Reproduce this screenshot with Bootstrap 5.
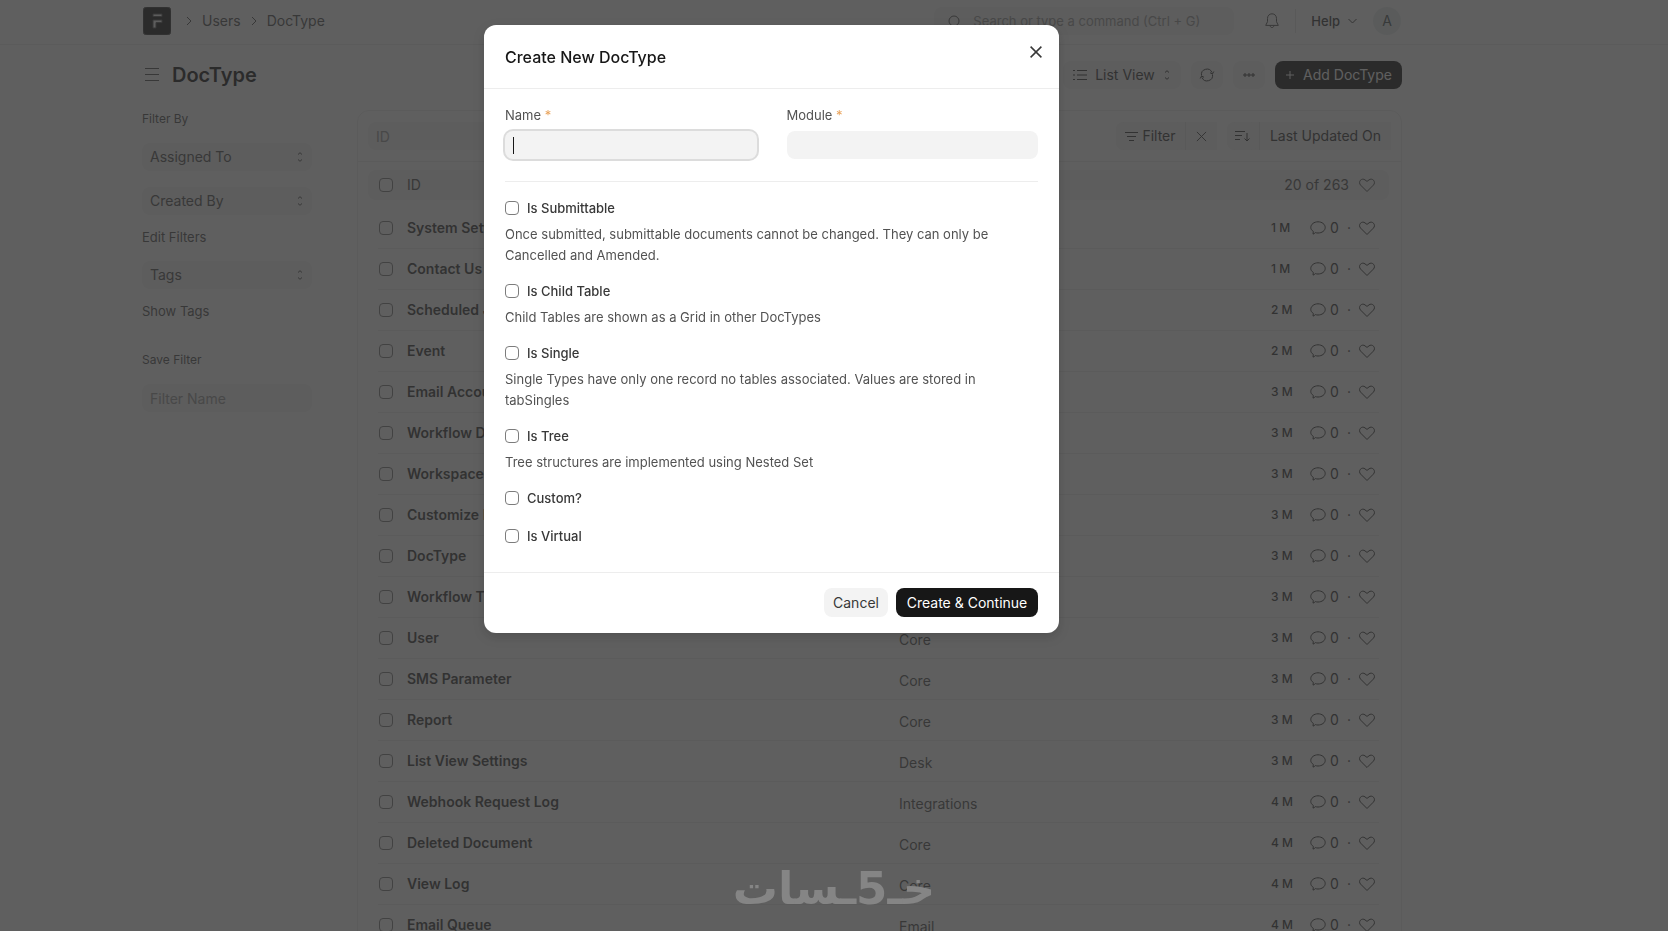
<!DOCTYPE html>
<html lang="en">
<head>
<meta charset="utf-8">
<meta name="viewport" content="width=device-width, initial-scale=1">
<title>DocType</title>
<link href="https://cdn.jsdelivr.net/npm/bootstrap@5.3.0/dist/css/bootstrap.min.css" rel="stylesheet">
<style>
:root { --ink: #171717; --ink-2: #383838; --ink-3: #525252; --muted: #999; --line: #ededed; --fill: #f3f3f3; --page-end: 124px; }
body { font-family: Inter, "Liberation Sans", sans-serif; font-size: 14px; line-height: 20px; color: var(--ink-2); height: 100vh; overflow: hidden; }
svg { display: block; fill: none; stroke: currentColor; flex: none; }
a { color: inherit; text-decoration: none; }
.page-end { padding-right: var(--page-end); }
.page-width { max-width: 1260px; margin: 0 auto; }
.gap-10 { gap: 10px; }
.topbar { height: 45px; padding-bottom: 2px; border-bottom: 1px solid var(--line); color: var(--ink-3); }
.topbar nav { padding: 0 1px; }
.app-logo { width: 28px; height: 28px; margin-right: 5px; }
.soft { background: var(--fill); border: 0; border-radius: 8px; height: 28px; color: var(--ink-2); font-size: 14px; line-height: 20px; }
.btn.soft, .btn.btn-dark-ink { padding: 0 8px; }
.soft::placeholder { color: var(--muted); }
.search-box { width: 300px; padding: 0 14px; gap: 12px; color: var(--ink-3); font-size: 13px; }
.search-box input { border: 0; background: none; outline: 0; font-size: 13px; padding: 0; color: var(--ink-3); }
.search-box input::placeholder { color: var(--muted); }
.bell { margin-left: 29px; }
.bar-rule { width: 1px; height: 24px; background: #e2e2e2; margin: 0 15px 0 14px; }
.help-link { font-size: 13px; font-weight: 500; color: var(--ink-2); }
.avatar { width: 28px; height: 28px; border-radius: 50%; background: #e8eeee; color: #4f5a5a; }
.page-head { height: 60px; padding-top: 16px; margin-bottom: 5px; }
.page-title { font-size: 20px; line-height: 28px; font-weight: 600; color: var(--ink); margin: 0; }
.menu-toggle { border: 0; background: none; padding: 7px 13px 7px 3px; color: var(--ink-3); }
.btn-dark-ink { background: var(--ink); color: #fff; border: 0; border-radius: 8px; height: 28px; font-size: 14px; line-height: 20px; }
.btn-icon { width: 32px; }
.btn-view { width: 118px; }
.btn-add { min-width: 127px; }
.side { width: 170px; margin-right: 45px; font-size: 13px; color: var(--ink-3); }
.side .soft { width: 170px; padding: 0 8px; color: var(--ink-3); }
.side-label { display: block; font-size: 12px; line-height: 18px; margin-bottom: 15px; }
.side-link { display: block; margin: 12px 0 14px; }
.list-card { border: 1px solid var(--line); border-radius: 12px; }
.card-tools { height: 51px; padding: 0 10px; border-bottom: 1px solid var(--line); }
.segment-rule { border-left: 1px solid #e2e2e2 !important; }
.seg-filter { min-width: 69px; }
.seg-icon { width: 32px; }
.seg-sort { min-width: 132px; }
.doc-table { width: calc(100% - 42px); margin: 8px 21px 0 20px; table-layout: fixed; border-collapse: separate; border-spacing: 0; isolation: isolate; }
.doc-table th, .doc-table td { padding: 0; vertical-align: middle; white-space: nowrap; }
.doc-table thead tr { position: relative; height: 38px; }
.doc-table thead th:first-child::before { content: ""; position: absolute; inset: 0 -10px 8px; background: var(--fill); border-radius: 8px; z-index: -1; }
.doc-table thead th { font-weight: 400; color: var(--ink-3); padding-bottom: 8px; }
.doc-table td { height: 41px; border-bottom: 1px solid var(--line); }
.doc-table td.doc-name { font-weight: 600; }
.doc-table td.doc-module { color: var(--ink-3); padding-top: 3px; }
.doc-table .tick { margin-left: 1px; }
.doc-age { font-size: 12px; font-weight: 500; }
.tick { appearance: none; width: 14px; height: 14px; border: 1px solid #7c7c7c; border-radius: 4px; margin: 0; background: #fff; display: block; flex: none; }
.modal-backdrop { --bs-backdrop-bg: #313131; --bs-backdrop-opacity: .776; }
.doc-modal { padding-right: 125px; }
.doc-modal .modal-dialog { max-width: 575px; margin: 25px auto; }
.doc-modal .modal-content { border: 0; border-radius: 12px; box-shadow: 0 4px 12px rgba(0,0,0,.15); }
.doc-modal .modal-header { height: 64px; padding: 0 17px 0 21px; border-color: var(--line); }
.doc-modal .modal-title { font-size: 16px; line-height: 24px; font-weight: 500; color: var(--ink); }
.doc-modal .modal-body { padding: 16px 21px 8px; font-size: 13px; color: var(--ink-3); }
.doc-modal .modal-footer { padding: 15px 21px 16px; gap: 8px; border-color: var(--line); }
.doc-modal .modal-footer > * { margin: 0; height: 29px; min-width: 64px; }
.doc-modal .modal-footer .btn-dark-ink { min-width: 142px; }
.close-x { border: 0; background: none; padding: 0; color: var(--ink-2); margin-bottom: 10px; }
.field-pair { gap: 30px; padding-bottom: 22px; border-bottom: 1px solid var(--line); margin-bottom: 16px; }
.field-pair label { display: block; margin-bottom: 6px; }
.field-pair input { width: 100%; padding: 0 8px; display: block; }
.field-pair input:focus { outline: 0; box-shadow: 0 0 0 2px #dcdcdc; }
.field-pair input:focus:placeholder-shown { caret-color: transparent; background: linear-gradient(var(--ink), var(--ink)) 8px center / 1px 17px no-repeat var(--fill); }
.req { color: #e9a35b; }
.choice { padding-bottom: 3px; margin-bottom: 15px; }
.choice label { font-weight: 500; color: var(--ink-2); }
.choice p { margin: 6px 0 -3px; line-height: 21px; }
.watermark { position: fixed; left: 0; right: 0; bottom: 14px; z-index: 1070; text-align: center; color: #858585; font: bold 45px/56px "DejaVu Sans", sans-serif; pointer-events: none; }
</style>
</head>
<body class="modal-open">

<svg width="0" height="0" class="position-absolute" aria-hidden="true">
  <symbol id="i-updown" viewBox="0 0 8 12"><path d="M2 3.500 4 1.700l2 1.800M2 8.500l2 1.800 2-1.800"/></symbol>
  <symbol id="i-heart" viewBox="0 0 16 16"><path d="M8 14.500 1.600 8.100C.3 6.800.2 4.700 1.400 3.300 2.700 1.900 4.700 1.800 6 2.900L8 4.400 10 2.900c1.300-1.100 3.300-1 4.600.4 1.200 1.400 1.100 3.500-.2 4.800z"/></symbol>
  <symbol id="i-comment" viewBox="0 0 16 16"><path d="M8 1.800c4 0 7.200 2.500 7.200 5.700S12 13 8 13c-.9 0-1.800-.1-2.600-.4-.8.8-1.600 1.300-2.400 1.500l.3-2.700C1.700 10.400.8 9 .8 7.500.8 4.300 4 1.800 8 1.800z"/></symbol>
  <symbol id="i-right" viewBox="0 0 6 10"><path d="m1 1 4 4-4 4"/></symbol>
  <symbol id="i-x" viewBox="0 0 12 12"><path d="m1 1 10 10M11 1 1 11"/></symbol>
</svg>

<header class="topbar page-end">
  <nav class="page-width d-flex align-items-center h-100" aria-label="Main">
    <div class="d-flex align-items-center gap-10">
      <a href="#" class="app-logo" aria-label="Home"><svg width="28" height="28" viewBox="0 0 28 28" stroke="none"><rect width="28" height="28" rx="4" fill="#171717"/><path fill="#f3f3f3" d="M10 7h9v2.500h-9zM10 13h9v2.600h-6V21h-3z"/></svg></a>
      <svg width="6" height="10"><use href="#i-right"/></svg>
      <a href="#">Users</a>
      <svg width="6" height="10"><use href="#i-right"/></svg>
      <a href="#">DocType</a>
    </div>
    <div class="soft search-box d-flex align-items-center ms-auto">
      <svg width="13" height="13" viewBox="0 0 13 13"><circle cx="6" cy="6" r="5"/><path d="m10 10 2.500 2.500"/></svg>
      <input type="text" class="flex-grow-1" aria-label="Search" placeholder="Search or type a command (Ctrl + G)">
    </div>
    <svg class="bell" width="18" height="18" viewBox="0 0 18 18"><path d="M9 1.800c-2.700 0-4.500 2-4.500 4.700v3.200L2.700 13.400h12.600L13.500 9.700V6.500C13.500 3.800 11.700 1.800 9 1.800zM7.200 13.600c0 2.600 3.600 2.600 3.600 0"/></svg>
    <div class="bar-rule"></div>
    <a href="#" class="help-link d-flex align-items-center gap-2 me-3 text-nowrap">Help <svg width="9" height="6" viewBox="0 0 9 6"><path d="m.5 1 4 4 4-4"/></svg></a>
    <span class="avatar d-flex align-items-center justify-content-center">A</span>
  </nav>
</header>

<main class="page-end">
  <div class="page-width">
    <div class="page-head d-flex align-items-start">
      <button class="menu-toggle" aria-label="Toggle sidebar"><svg width="14" height="14" viewBox="0 0 14 14"><path d="M0 .5h14M0 6.500h14M0 12.500h14"/></svg></button>
      <h1 class="page-title">DocType</h1>
      <div class="d-flex ms-auto gap-10">
        <button class="btn soft btn-view d-flex align-items-center justify-content-center"><svg class="me-2" width="14" height="12" viewBox="0 0 14 12"><path d="M0 1.500h2M4 1.500h10M0 6h2M4 6h10M0 10.500h2M4 10.500h10"/></svg>List View<svg class="ms-2" width="8" height="12"><use href="#i-updown"/></svg></button>
        <button class="btn soft btn-icon" aria-label="Refresh"><svg width="16" height="14" viewBox="0 0 16 14"><path d="M2.500 7.500A5.500 5.500 0 0 1 13 4.500M13.500 6.500A5.500 5.500 0 0 1 3 9.500M14.800 3.500 13.400 6 11 4.700M1.200 10.500 2.600 8 5 9.300"/></svg></button>
        <button class="btn soft btn-icon" aria-label="More"><svg width="16" height="4" viewBox="0 0 16 4" stroke="none" fill="currentColor"><path d="M3 1h2v2H3zM7 1h2v2H7zM11 1h2v2h-2z"/></svg></button>
        <button class="btn btn-dark-ink btn-add d-flex align-items-center justify-content-center"><svg class="me-2" width="10" height="10" viewBox="0 0 10 10"><path d="M5 1v8M1 5h8"/></svg>Add DocType</button>
      </div>
    </div>

    <div class="d-flex align-items-start">
      <aside class="side">
        <span class="side-label">Filter By</span>
        <button class="btn soft d-flex align-items-center justify-content-between mb-3">Assigned To <svg width="8" height="12"><use href="#i-updown"/></svg></button>
        <button class="btn soft d-flex align-items-center justify-content-between">Created By <svg width="8" height="12"><use href="#i-updown"/></svg></button>
        <a href="#" class="side-link">Edit Filters</a>
        <button class="btn soft d-flex align-items-center justify-content-between">Tags <svg width="8" height="12"><use href="#i-updown"/></svg></button>
        <a href="#" class="side-link">Show Tags</a>
        <label for="filter-name" class="side-label pt-3">Save Filter</label>
        <input id="filter-name" class="soft" type="text" placeholder="Filter Name">
      </aside>

      <section class="list-card flex-grow-1">
        <div class="card-tools d-flex align-items-center gap-10">
          <input class="soft px-2" type="text" aria-label="ID" placeholder="ID">
          <div class="soft d-flex ms-auto">
            <button class="btn soft seg-filter d-flex align-items-center justify-content-center"><svg class="me-1" width="13" height="10" viewBox="0 0 13 10"><path d="M0 1.500h13M2 5.500h9M4 9.500h5"/></svg>Filter</button>
            <button class="btn soft seg-icon segment-rule rounded-0 d-flex align-items-center justify-content-center" aria-label="Clear filter"><svg width="11" height="11"><use href="#i-x"/></svg></button>
          </div>
          <div class="soft d-flex">
            <button class="btn soft seg-icon" aria-label="Sort direction"><svg width="15" height="12" viewBox="0 0 15 12"><path d="M0 1.500h10M0 5.500h7M0 9.500h5M12 3v8M9.500 8.500 12 11l2.500-2.500"/></svg></button>
            <button class="btn soft seg-sort segment-rule rounded-0 text-nowrap">Last Updated On</button>
          </div>
        </div>
        <table class="doc-table">
          <colgroup><col style="width:29px"><col><col style="width:372px"><col style="width:108px"></colgroup>
          <thead><tr>
            <th><input type="checkbox" class="tick" aria-label="Select all"></th>
            <th>ID</th>
            <th></th>
            <th><div class="d-flex align-items-center justify-content-end gap-10 pe-1">20 of 263 <svg width="16" height="16"><use href="#i-heart"/></svg></div></th>
          </tr></thead>
          <tbody id="doc-rows"></tbody>
        </table>
      </section>
    </div>
  </div>
</main>

<div class="modal-backdrop show"></div>
<div class="modal show d-block doc-modal" role="dialog" aria-modal="true" aria-labelledby="dlg-title">
  <div class="modal-dialog">
    <div class="modal-content">
      <div class="modal-header">
        <h2 class="modal-title" id="dlg-title">Create New DocType</h2>
        <button class="close-x" aria-label="Close"><svg width="12" height="12" viewBox="0 0 12 12" stroke-width="1.500"><path d="m.6.6 10.800 10.800M11.400.6.6 11.400"/></svg></button>
      </div>
      <div class="modal-body">
        <div class="field-pair d-flex">
          <div class="flex-fill"><label for="f-name">Name <span class="req">*</span></label><input class="soft" id="f-name" type="text" placeholder=" " autofocus></div>
          <div class="flex-fill"><label for="f-module">Module <span class="req">*</span></label><input class="soft" id="f-module" type="text"></div>
        </div>
        <div class="choice"><label class="d-flex align-items-center gap-2"><input type="checkbox" class="tick">Is Submittable</label><p>Once submitted, submittable documents cannot be changed. They can only be Cancelled and Amended.</p></div>
        <div class="choice"><label class="d-flex align-items-center gap-2"><input type="checkbox" class="tick">Is Child Table</label><p>Child Tables are shown as a Grid in other DocTypes</p></div>
        <div class="choice"><label class="d-flex align-items-center gap-2"><input type="checkbox" class="tick">Is Single</label><p>Single Types have only one record no tables associated. Values are stored in tabSingles</p></div>
        <div class="choice"><label class="d-flex align-items-center gap-2"><input type="checkbox" class="tick">Is Tree</label><p>Tree structures are implemented using Nested Set</p></div>
        <div class="choice"><label class="d-flex align-items-center gap-2"><input type="checkbox" class="tick">Custom?</label></div>
        <div class="choice"><label class="d-flex align-items-center gap-2"><input type="checkbox" class="tick">Is Virtual</label></div>
      </div>
      <div class="modal-footer">
        <button class="btn soft">Cancel</button>
        <button class="btn btn-dark-ink">Create &amp; Continue</button>
      </div>
    </div>
  </div>
</div>

<div class="watermark" lang="ar" dir="rtl">خـ5ـسات</div>

<script src="https://cdn.jsdelivr.net/npm/bootstrap@5.3.0/dist/js/bootstrap.bundle.min.js"></script>
<script>
const docs = [
  ["System Settings", "Core", 1], ["Contact Us Settings", "Website", 1], ["Scheduled Job Type", "Core", 2],
  ["Event", "Desk", 2], ["Email Account", "Email", 3], ["Workflow Document State", "Workflow", 3],
  ["Workspace", "Desk", 3], ["Customize Form", "Custom", 3], ["DocType", "Core", 3],
  ["Workflow Transition", "Workflow", 3], ["User", "Core", 3], ["SMS Parameter", "Core", 3],
  ["Report", "Core", 3], ["List View Settings", "Desk", 3], ["Webhook Request Log", "Integrations", 4],
  ["Deleted Document", "Core", 4], ["View Log", "Core", 4], ["Email Queue", "Email", 4]
];
document.getElementById("doc-rows").innerHTML = docs.map(([name, module, age]) => `
  <tr>
    <td><input type="checkbox" class="tick" aria-label="Select ${name}"></td>
    <td class="doc-name"><a href="#">${name}</a></td>
    <td class="doc-module">${module}</td>
    <td><div class="d-flex align-items-center justify-content-end pe-1">
      <span class="doc-age me-auto">${age} M</span>
      <svg class="me-1" width="16" height="16"><use href="#i-comment"/></svg>0
      <span class="mx-2">·</span>
      <svg width="16" height="16"><use href="#i-heart"/></svg>
    </div></td>
  </tr>`).join("");
document.getElementById("f-name").focus();
</script>
</body>
</html>
